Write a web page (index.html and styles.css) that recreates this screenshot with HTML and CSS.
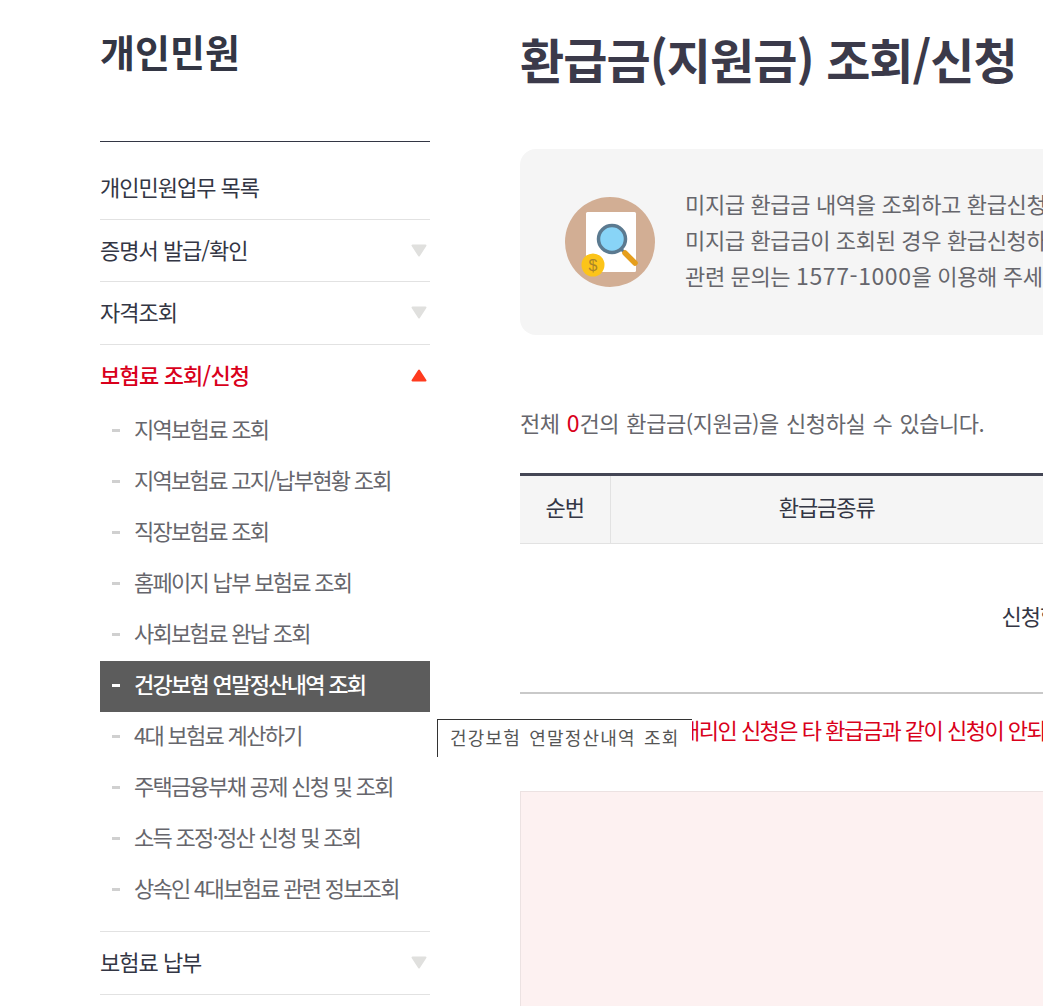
FILE: index.html
```html
<!DOCTYPE html>
<html lang="ko">
<head>
    <meta charset="UTF-8">
    <title>환급금(지원금) 조회/신청</title>
    <link rel="stylesheet" href="styles.css">
</head>
<body>
    <div class="wrap">
        <!-- 좌측 메뉴 -->
        <aside class="side">
            <h2 class="side-title">개인민원</h2>
            <ul class="menu">
                <li class="menu-item"><a class="menu-link">개인민원업무 목록</a></li>
                <li class="menu-item">
                    <a class="menu-link">증명서 발급/확인
                        <svg class="arrow" width="16" height="13" viewBox="0 0 16 13"><polygon points="1.5,1.5 14.5,1.5 8,11.5"/></svg>
                    </a>
                </li>
                <li class="menu-item">
                    <a class="menu-link">자격조회
                        <svg class="arrow" width="16" height="13" viewBox="0 0 16 13"><polygon points="1.5,1.5 14.5,1.5 8,11.5"/></svg>
                    </a>
                </li>
                <li class="menu-item open">
                    <a class="menu-link">보험료 조회/신청
                        <svg class="arrow" width="16" height="13" viewBox="0 0 16 13"><polygon points="1.5,11.5 14.5,11.5 8,1.5"/></svg>
                    </a>
                    <ul class="sub">
                        <li class="sub-item">지역보험료 조회</li>
                        <li class="sub-item">지역보험료 고지/납부현황 조회</li>
                        <li class="sub-item">직장보험료 조회</li>
                        <li class="sub-item">홈페이지 납부 보험료 조회</li>
                        <li class="sub-item">사회보험료 완납 조회</li>
                        <li class="sub-item active">건강보험 연말정산내역 조회</li>
                        <li class="sub-item">4대 보험료 계산하기</li>
                        <li class="sub-item">주택금융부채 공제 신청 및 조회</li>
                        <li class="sub-item">소득 조정·정산 신청 및 조회</li>
                        <li class="sub-item">상속인 4대보험료 관련 정보조회</li>
                    </ul>
                </li>
                <li class="menu-item">
                    <a class="menu-link">보험료 납부
                        <svg class="arrow" width="16" height="13" viewBox="0 0 16 13"><polygon points="1.5,1.5 14.5,1.5 8,11.5"/></svg>
                    </a>
                </li>
            </ul>
        </aside>

        <!-- 본문 -->
        <main class="content">
            <h1 class="page-title">환급금(지원금) 조회/신청</h1>

            <div class="info-box">
                <svg class="info-icon" width="90" height="90" viewBox="0 0 90 90">
                    <circle cx="45" cy="45" r="45" fill="#d2ae94"/>
                    <rect x="21" y="15" width="50" height="60" rx="1.5" fill="#fff"/>
                    <line x1="55" y1="51" x2="61" y2="57" stroke="#5b7a90" stroke-width="3"/>
                    <line x1="60" y1="56" x2="70" y2="66" stroke="#e59e1c" stroke-width="5.5" stroke-linecap="round"/>
                    <circle cx="47" cy="42" r="13.5" fill="#88d4f7" stroke="#5b7a90" stroke-width="3.5"/>
                    <circle cx="28" cy="68" r="11.5" fill="#fcc419"/>
                    <text class="coin-text" x="28" y="74">$</text>
                </svg>
                <p class="info-text">
                    미지급 환급금 내역을 조회하고 환급신청을 하실 수 있습니다.<br>
                    미지급 환급금이 조회된 경우 환급신청하기 버튼을 눌러 주세요.<br>
                    관련 문의는 <span class="num">1577-1000</span>을 이용해 주세요.
                </p>
            </div>

            <p class="total">전체 <em class="num">0</em>건의 환급금(지원금)을 신청하실 수 있습니다.</p>

            <table class="list">
                <thead>
                    <tr>
                        <th class="col-no">순번</th>
                        <th class="col-type">환급금종류</th>
                        <th>환급금액</th>
                    </tr>
                </thead>
                <tbody>
                    <tr>
                        <td colspan="3">신청할 수 있는 환급금 내역이 없습니다.</td>
                    </tr>
                </tbody>
            </table>

            <p class="notice">대리인 신청은 타 환급금과 같이 신청이 안되므로 별도로 신청해 주시기 바랍니다.</p>

            <div class="pink-box"></div>
        </main>
    </div>

    <div class="tooltip">건강보험 연말정산내역 조회</div>
</body>
</html>
```

FILE: styles.css
```css
* {
    box-sizing: border-box;
}

html, body {
    height: 100%;
    overflow: hidden;
}

body {
    margin: 0;
    background-color: #fff;
    color: #333644;
    font-family: "Noto Sans CJK KR", "Noto Sans", sans-serif;
    font-size: 22px;
    letter-spacing: -1px;
}

ul {
    list-style: none;
    margin: 0;
    padding: 0;
}

.wrap {
    display: flex;
    gap: 90px;
    width: 1900px;
    padding-left: 100px;
}

/* 좌측 메뉴 */
.side {
    flex: none;
    width: 330px;
}

.side-title {
    height: 142px;
    margin: 0;
    padding-top: 21px;
    border-bottom: 1px solid #333644;
    font-size: 38px;
    line-height: 60px;
    font-weight: 700;
    letter-spacing: 0;
}

.menu {
    padding-top: 15px;
}

.menu-item {
    border-bottom: 1px solid #e2e2e2;
}

.menu-link {
    display: flex;
    justify-content: space-between;
    align-items: center;
    height: 62px;
    padding: 0 3px 4px 0;
}

.menu-item:nth-child(2) .menu-link {
    height: 61px;
}

.arrow {
    margin-top: 3px;
    fill: #e0e0de;
    stroke: #e0e0de;
    stroke-width: 2;
    stroke-linejoin: round;
}

.open .menu-link {
    height: 61px;
    color: #d9001b;
    font-weight: 500;
    letter-spacing: -0.8px;
}

.open .arrow {
    fill: #ff3b1f;
    stroke: #ff3b1f;
}

.sub {
    padding-bottom: 15px;
}

.sub-item {
    display: flex;
    align-items: center;
    height: 51px;
    padding: 0 0 8px 12px;
    color: #66666c;
    letter-spacing: -1.7px;
}

.sub-item::before {
    content: "";
    flex: none;
    width: 8px;
    height: 3px;
    margin: 6px 14px 0 0;
    background-color: #d0d0d0;
}

.sub-item.active {
    background-color: #5c5c5c;
    color: #fff;
    font-weight: 500;
}

.sub-item.active::before {
    background-color: #fff;
}

/* 본문 */
.content {
    flex: none;
    width: 1302px;
}

.page-title {
    height: 149px;
    margin: 0;
    padding-top: 19px;
    color: #3b3a4a;
    font-size: 48px;
    line-height: 78px;
    font-weight: 700;
    letter-spacing: -0.95px;
}

.info-box {
    display: flex;
    align-items: center;
    gap: 30px;
    height: 186px;
    padding: 0 0 0 45px;
    border-radius: 16px;
    background-color: #f5f5f5;
}

.info-icon {
    flex: none;
}

.coin-text {
    font-family: "Liberation Sans", sans-serif;
    font-size: 16px;
    text-anchor: middle;
    fill: #a9852a;
    letter-spacing: 0;
}

.info-text {
    margin: 0 0 6px;
    color: #66666c;
    line-height: 36px;
    letter-spacing: -0.35px;
}

.info-text .num {
    font-size: 23px;
    letter-spacing: 0.6px;
}

.total {
    margin: 68px 0 32px;
    color: #66666c;
    line-height: 38px;
    letter-spacing: -0.45px;
    word-spacing: 1.5px;
}

.total em {
    color: #d9001b;
    font-size: 23px;
    font-style: normal;
    letter-spacing: 0;
}

.list {
    width: 100%;
    border-collapse: collapse;
    table-layout: fixed;
    border-top: 3px solid #444655;
    border-bottom: 2px solid #c9c9c9;
}

.list th {
    height: 69px;
    padding: 0 0 8px;
    border-bottom: 1px solid #e2e2e2;
    background-color: #f5f5f5;
    font-weight: 400;
}

.col-no {
    width: 90px;
    border-right: 1px solid #e2e2e2;
}

.col-type {
    width: 433px;
}

.list td {
    height: 149px;
    padding: 0 0 6px;
    text-align: center;
}

.notice {
    margin: 15px 0 0;
    padding-left: 160px;
    color: #d9001b;
    line-height: 40px;
    letter-spacing: -1.5px;
}

.pink-box {
    height: 400px;
    margin-top: 42px;
    border: 1px solid #ece2e2;
    background-color: #fdf1f1;
}

/* 메뉴 말풍선 */
.tooltip {
    position: absolute;
    left: 437px;
    top: 719px;
    width: 255px;
    height: 38px;
    padding-left: 12px;
    border-top: 1px solid #333;
    border-left: 1px solid #333;
    background-color: #fff;
    color: #555;
    font-size: 18px;
    line-height: 35px;
    letter-spacing: 1.2px;
    word-spacing: 2px;
    white-space: nowrap;
}
```
